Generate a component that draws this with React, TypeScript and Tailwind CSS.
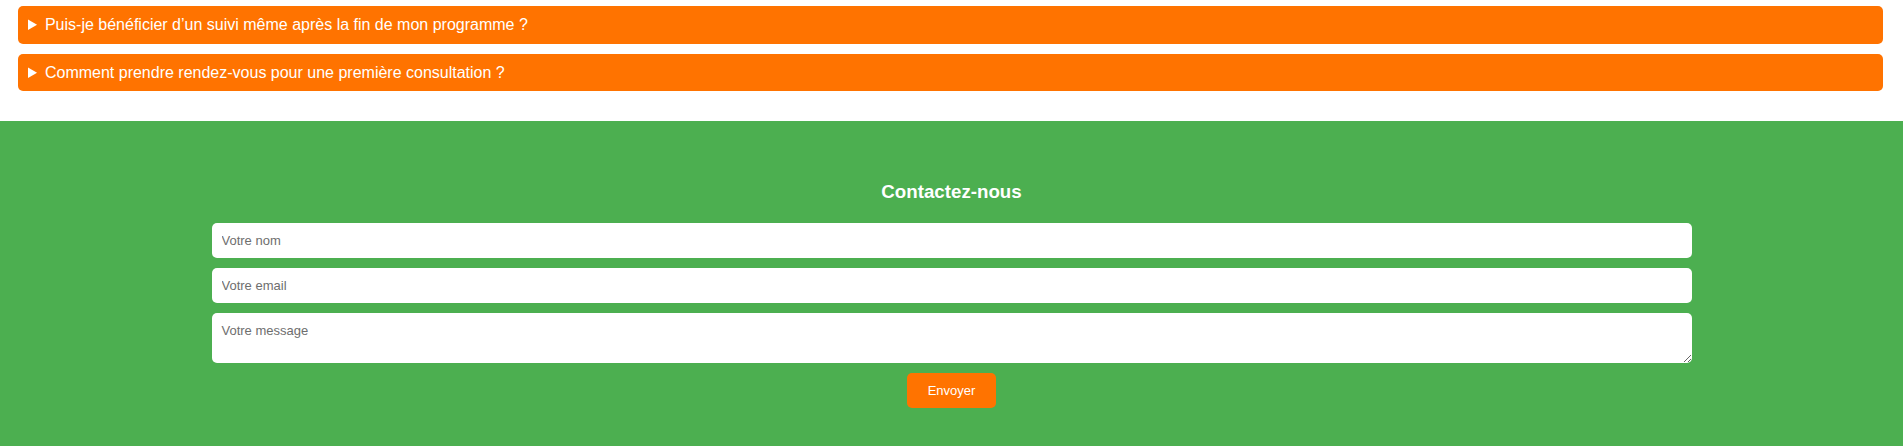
import React from 'react';

const questions = [
  "Puis-je bénéficier d’un suivi même après la fin de mon programme ?",
  'Comment prendre rendez-vous pour une première consultation ?',
];

export default function App() {
  return (
    <div className="bg-white font-['Liberation_Sans',Arial,sans-serif]">
      {/* FAQ */}
      <div className="flex flex-col gap-[10px] pt-[6px] pb-[30px] ml-[18px] mr-5">
        {questions.map((q) => (
          <details key={q} className="rounded-[5px] bg-[#ff7300] text-white">
            <summary className="list-item cursor-pointer px-[10px] py-[10px] text-base leading-[17.6px]">
              {q}
            </summary>
          </details>
        ))}
      </div>

      {/* Contact */}
      <section className="bg-[#4caf50] pt-[60px] pb-10">
        <h3 className="mb-5 text-center text-[18.72px] font-bold leading-[22px] text-white">
          Contactez-nous
        </h3>
        <form className="mx-auto flex w-[1480px] flex-col items-center gap-[10px]">
          <input
            type="text"
            placeholder="Votre nom"
            className="block w-full rounded-[5px] bg-white px-[10px] py-[10px] text-[13px] leading-[15px] text-black placeholder:text-[#6e6e6e] outline-none"
          />
          <input
            type="email"
            placeholder="Votre email"
            className="block w-full rounded-[5px] bg-white px-[10px] py-[10px] text-[13px] leading-[15px] text-black placeholder:text-[#6e6e6e] outline-none"
          />
          <textarea
            placeholder="Votre message"
            className="block h-[50px] w-full rounded-[5px] bg-white px-[10px] py-[10px] text-[13px] leading-[15px] text-black placeholder:text-[#6e6e6e] outline-none"
          />
          <button
            type="submit"
            className="rounded-[5px] bg-[#ff7300] px-[21px] py-[10px] text-[13px] leading-[15px] text-white"
          >
            Envoyer
          </button>
        </form>
      </section>
    </div>
  );
}
